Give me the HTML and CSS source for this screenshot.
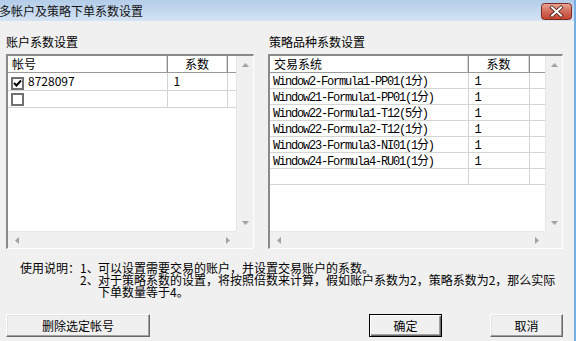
FILE: index.html
```html
<!DOCTYPE html>
<html lang="zh-CN">
<head>
    <meta charset="UTF-8">
    <title>多帐户及策略下单系数设置</title>
    <link rel="stylesheet" href="styles.css">
</head>
<body>
<div class="dlg">
    <div class="titlebar">
        <span class="title">多帐户及策略下单系数设置</span>
        <svg class="close" width="31" height="17" viewBox="0 0 31 17">
            <defs>
                <linearGradient id="cg" x1="0" y1="0" x2="0" y2="1">
                    <stop offset="0" stop-color="#e9a99c"/>
                    <stop offset="0.45" stop-color="#d47060"/>
                    <stop offset="1" stop-color="#c4422f"/>
                </linearGradient>
            </defs>
            <rect x="0.5" y="0.5" width="30" height="16" rx="3" fill="url(#cg)" stroke="#7d2a20"/>
            <path d="M11 4.5 L20 12.5 M20 4.5 L11 12.5" stroke="#4a1a14" stroke-width="3.6" stroke-linecap="square"/>
            <path d="M11 4.5 L20 12.5 M20 4.5 L11 12.5" stroke="#fff" stroke-width="2" stroke-linecap="square"/>
        </svg>
    </div>

    <div class="content">
        <div class="panels">
            <!-- 账户 -->
            <div class="panel acc">
                <div class="label">账户系数设置</div>
                <div class="listbox">
                    <div class="view">
                        <table class="grid">
                            <colgroup><col style="width:159px"><col style="width:60px"><col></colgroup>
                            <tr><th class="l">帐号</th><th>系数</th><th class="fill"></th></tr>
                            <tr><td><span class="chk on"><svg width="9" height="9" viewBox="0 0 9 9"><path d="M1 4 L3.5 6.5 L8 1.5" fill="none" stroke="#000" stroke-width="2"/></svg></span>8728097</td><td class="n">1</td><td class="fill"></td></tr>
                            <tr><td><span class="chk"></span></td><td class="n"></td><td class="fill"></td></tr>
                        </table>
                    </div>
                    <div class="vscroll">
                        <div class="sbtn"><svg width="7" height="4"><path d="M0 4 L3.5 0 L7 4Z" fill="#a3a3a3"/></svg></div>
                        <div class="sbtn"><svg width="7" height="4"><path d="M0 0 L3.5 4 L7 0Z" fill="#a3a3a3"/></svg></div>
                    </div>
                    <div class="hscroll">
                        <div class="sbtn"><svg width="4" height="7"><path d="M4 0 L0 3.5 L4 7Z" fill="#a3a3a3"/></svg></div>
                        <div class="sbtn"><svg width="4" height="7"><path d="M0 0 L4 3.5 L0 7Z" fill="#a3a3a3"/></svg></div>
                    </div>
                    <div class="corner"></div>
                </div>
            </div>

            <!-- 策略 -->
            <div class="panel strat">
                <div class="label">策略品种系数设置</div>
                <div class="listbox">
                    <div class="view">
                        <table class="grid rows16">
                            <colgroup><col style="width:198px"><col style="width:61px"><col></colgroup>
                            <tr><th class="l">交易系统</th><th>系数</th><th class="fill"></th></tr>
                            <tr><td>Window2-Formula1-PP01(1分)</td><td class="n">1</td><td class="fill"></td></tr>
                            <tr><td>Window21-Formula1-PP01(1分)</td><td class="n">1</td><td class="fill"></td></tr>
                            <tr><td>Window22-Formula1-T12(5分)</td><td class="n">1</td><td class="fill"></td></tr>
                            <tr><td>Window22-Formula2-T12(1分)</td><td class="n">1</td><td class="fill"></td></tr>
                            <tr><td>Window23-Formula3-NI01(1分)</td><td class="n">1</td><td class="fill"></td></tr>
                            <tr><td>Window24-Formula4-RU01(1分)</td><td class="n">1</td><td class="fill"></td></tr>
                            <tr><td></td><td class="n"></td><td class="fill"></td></tr>
                        </table>
                    </div>
                    <div class="vscroll">
                        <div class="sbtn"><svg width="7" height="4"><path d="M0 4 L3.5 0 L7 4Z" fill="#a3a3a3"/></svg></div>
                        <div class="sbtn"><svg width="7" height="4"><path d="M0 0 L3.5 4 L7 0Z" fill="#a3a3a3"/></svg></div>
                    </div>
                    <div class="hscroll">
                        <div class="sbtn"><svg width="4" height="7"><path d="M4 0 L0 3.5 L4 7Z" fill="#a3a3a3"/></svg></div>
                        <div class="sbtn"><svg width="4" height="7"><path d="M0 0 L4 3.5 L0 7Z" fill="#a3a3a3"/></svg></div>
                    </div>
                    <div class="corner"></div>
                </div>
            </div>
        </div>

        <div class="notes">
            <div class="nlabel">使用说明：</div>
            <div class="items">
                <div class="item"><span class="num">1、</span><span class="txt">可以设置需要交易的账户，并设置交易账户的系数。</span></div>
                <div class="item"><span class="num">2、</span><span class="txt">对于策略系数的设置，将按照倍数来计算，假如账户系数为2，策略系数为2，那么实际<br>下单数量等于4。</span></div>
            </div>
        </div>

        <div class="buttons">
            <button class="btn del">删除选定帐号</button>
            <button class="btn ok">确定</button>
            <button class="btn cancel">取消</button>
        </div>
    </div>
</div>
</body>
</html>
```

FILE: styles.css
```css
* { box-sizing: border-box; }
body {
    margin: 0;
    font-family: "Noto Sans CJK SC", "Liberation Sans", sans-serif;
    font-size: 12px;
    color: #000;
}
.dlg {
    width: 576px;
    height: 341px;
    background: #f0f0f0;
    border-right: 2px solid #74aee4;
    overflow: hidden;
}
.titlebar {
    height: 21px;
    display: flex;
    align-items: center;
    justify-content: space-between;
    padding: 0 2px 0 0;
    background: linear-gradient(#b3cce8, #d4e3f4);
}
.title { line-height: 21px; margin-left: -1px; color: #111; }
.close { display: block; margin-top: 1px; }

.content { padding: 14px 11px 0 6px; }
.panels { display: flex; gap: 14px; }
.acc { width: 248px; }
.strat { width: 295px; }
.label { line-height: 14px; height: 19px; }
.strat .label { padding-left: 1px; }

.listbox {
    height: 195px;
    display: grid;
    grid-template-columns: 1fr 17px;
    grid-template-rows: 1fr 17px;
    border-top: 2px solid #8a8a8a;
    border-left: 2px solid #8a8a8a;
    border-right: 1px solid #fff;
    border-bottom: 1px solid #fff;
    background: #fff;
}
.view { background: #fff; overflow: hidden; }

.grid {
    border-collapse: collapse;
    table-layout: fixed;
    width: 100%;
}
.grid th {
    height: 16px;
    padding: 0;
    font-weight: normal;
    text-align: center;
    line-height: 15px;
    background: #fff;
    border-right: 1px solid #8c8c8c;
    border-bottom: 1px solid #9a9a9a;
    box-shadow: inset -1px 0 0 #d8d8d8;
}
.grid th.l { text-align: left; padding-left: 4px; }
.grid th.fill { border-right: none; box-shadow: none; }
.grid td {
    height: 17px;
    padding: 0 0 0 3px;
    line-height: 16px;
    border-right: 1px solid #d4d4d4;
    border-bottom: 1px solid #d4d4d4;
    white-space: nowrap;
    overflow: hidden;
}
.grid td.n { padding-left: 6px; }
.grid td.fill { border-right: none; }
/* 策略表：宋体风格等宽字 */
.rows16 td {
    height: 16px;
    padding-top: 3px;
    line-height: 12px;
    vertical-align: top;
    font-family: "Liberation Mono", "Noto Sans CJK SC", monospace;
    letter-spacing: -1.2px;
}

.chk {
    display: inline-flex;
    align-items: center;
    justify-content: center;
    width: 13px;
    height: 13px;
    margin: 0 4px 0 0;
    vertical-align: -2px;
    border: 2px solid #707070;
    background: #fff;
}

.vscroll, .hscroll {
    background: #f0f0f0;
    display: flex;
    justify-content: space-between;
}
.vscroll { flex-direction: column; border-left: 1px solid #e6e6e6; }
.hscroll { border-top: 1px solid #e6e6e6; }
.sbtn {
    width: 17px;
    height: 17px;
    display: flex;
    align-items: center;
    justify-content: center;
}
.vscroll .sbtn { width: 16px; }
.hscroll .sbtn { height: 16px; }
.corner { background: #f0f0f0; }

.notes {
    display: flex;
    margin-top: 13px;
    padding-left: 14px;
    line-height: 12px;
}
.nlabel { width: 60px; }
.item { display: flex; }
.num { width: 18px; }
.txt { white-space: nowrap; }

.buttons {
    display: flex;
    margin-top: 16px;
}
.btn {
    height: 23px;
    padding: 0;
    font-family: inherit;
    font-size: 12px;
    color: #000;
    background: #f0f0f0;
    border: 1px solid;
    border-color: #fff #696969 #696969 #fff;
    box-shadow: inset -1px -1px 0 #a0a0a0, inset 1px 1px 0 #e3e3e3;
}
.del { width: 144px; }
.ok { width: 73px; margin-left: auto; border: 1px solid #000; box-shadow: inset 1px 1px 0 #fff, inset -1px -1px 0 #696969, inset -2px -2px 0 #a0a0a0; }
.cancel { width: 73px; margin-left: 48px; }
```
